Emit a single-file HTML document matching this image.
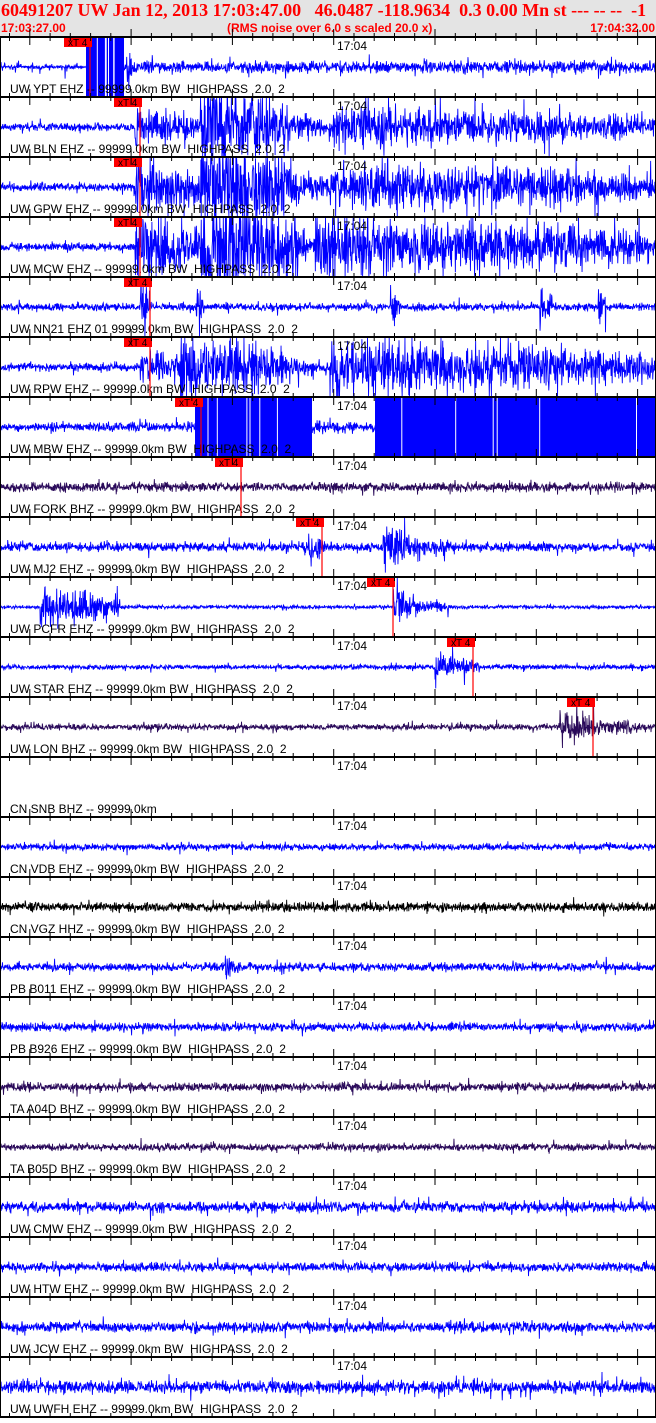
<!DOCTYPE html>
<html><head><meta charset="utf-8"><style>
html,body{margin:0;padding:0;background:#fff;width:656px;height:1418px;overflow:hidden}
#hd{position:absolute;left:0;top:0;width:656px;height:37px;background:#e4e4e4}
#t1{position:absolute;left:1px;top:0px;font:bold 18px "Liberation Serif",serif;color:#f00;white-space:pre}
.t2{position:absolute;top:21px;font:bold 12px "Liberation Sans",sans-serif;color:#f00;white-space:pre}
#w{position:absolute;left:0;top:0;width:656px;height:1418px}
text{white-space:pre}
</style></head><body>
<div id="hd">
<div id="t1">60491207 UW Jan 12, 2013 17:03:47.00   46.0487 -118.9634  0.3 0.00 Mn st --- -- --  -1</div>
<div class="t2" style="left:1px">17:03:27.00</div>
<div class="t2" style="left:227px">(RMS noise over 6.0 s scaled 20.0 x)</div>
<div class="t2" style="right:1px">17:04:32.00</div>
</div>
<div id="w"></div>
<script>
(function(){
var seed=12345;
function rnd(){seed=(seed*16807)%2147483647;return seed/2147483647;}
function g(){return (rnd()+rnd()+rnd()-1.5)*1.4;}
var B='#0000ff',P='#2a0a5a',K='#000000';
var T=[
["UW YPT EHZ -- 99999.0km BW  HIGHPASS  2.0  2",B,4,[[126,132,20]],64,[[86,124]]],
["UW BLN EHZ -- 99999.0km BW  HIGHPASS  2.0  2",B,2.5,[[135,200,14],[200,290,30],[290,330,9],[330,656,14]],114,[]],
["UW GPW EHZ -- 99999.0km BW  HIGHPASS  2.0  2",B,2.5,[[135,200,20],[200,290,38],[290,330,12],[330,656,17]],114,[]],
["UW MCW EHZ -- 99999.0km BW  HIGHPASS  2.0  2",B,2.5,[[135,200,28],[200,300,45],[300,315,12],[315,656,22]],114,[]],
["UW NN21 EHZ 01 99999.0km BW  HIGHPASS  2.0  2",B,2.5,[[140,150,25],[196,204,14],[390,400,12],[540,552,15],[598,606,14]],124,[]],
["UW RPW EHZ -- 99999.0km BW  HIGHPASS  2.0  2",B,2.5,[[140,180,13],[180,290,24],[290,330,7],[330,656,20]],124,[]],
["UW MBW EHZ -- 99999.0km BW  HIGHPASS  2.0  2",B,3,[[312,375,5]],175,[[195,312],[375,656]]],
["UW FORK BHZ -- 99999.0km BW  HIGHPASS  2.0  2",P,3,[],215,[]],
["UW MJ2 EHZ -- 99999.0km BW  HIGHPASS  2.0  2",B,3,[[308,325,13],[383,410,20],[410,460,7]],296,[]],
["UW PCFR EHZ -- 99999.0km BW  HIGHPASS  2.0  2",B,1.2,[[40,120,14],[393,410,16],[410,450,6]],367,[]],
["UW STAR EHZ -- 99999.0km BW  HIGHPASS  2.0  2",B,1.6,[[435,480,9]],447,[]],
["UW LON BHZ -- 99999.0km BW  HIGHPASS  2.0  2",P,2,[[560,600,12],[600,640,6]],567,[]],
["CN SNB BHZ -- 99999.0km",B,0,[],-1,[]],
["CN VDB EHZ -- 99999.0km BW  HIGHPASS  2.0  2",B,2.2,[],-1,[]],
["CN VGZ HHZ -- 99999.0km BW  HIGHPASS  2.0  2",K,3,[],-1,[]],
["PB B011 EHZ -- 99999.0km BW  HIGHPASS  2.0  2",B,2.7,[[225,240,8]],-1,[]],
["PB B926 EHZ -- 99999.0km BW  HIGHPASS  2.0  2",B,2.7,[],-1,[]],
["TA A04D BHZ -- 99999.0km BW  HIGHPASS  2.0  2",P,2.7,[],-1,[]],
["TA B05D BHZ -- 99999.0km BW  HIGHPASS  2.0  2",P,2.3,[],-1,[]],
["UW CMW EHZ -- 99999.0km BW  HIGHPASS  2.0  2",B,3.4,[],-1,[]],
["UW HTW EHZ -- 99999.0km BW  HIGHPASS  2.0  2",B,3,[],-1,[]],
["UW JCW EHZ -- 99999.0km BW  HIGHPASS  2.0  2",B,3.4,[],-1,[]],
["UW UWFH EHZ -- 99999.0km BW  HIGHPASS  2.0  2",B,4.2,[],-1,[]]];
var o=[];
o.push('<svg width="656" height="1418" xmlns="http://www.w3.org/2000/svg">');
for(var i=0;i<T.length;i++){
 var t=T[i],top=37+60*i,c=top+30;
 if(t[2]>0){
  var d=['M0 '+c];
  for(var x=0;x<=656;x+=0.35){
   var a=t[2];
   for(var j=0;j<t[3].length;j++){var e=t[3][j];
    if(x>=e[0]&&x<e[1]){var v=e[2]*(1-0.5*(x-e[0])/(e[1]-e[0]));if(v>a)a=v;}}
   if(i==0&&x<86)a=(rnd()<0.25?4:1);
   var y=c+g()*a*(rnd()<0.08?2:1);
   if(y<top+1)y=top+1;if(y>top+59)y=top+59;
   d.push('L'+x.toFixed(2)+' '+y.toFixed(1));
  }
  o.push('<path d="'+d.join('')+'" fill="none" stroke="'+t[1]+'" stroke-width="0.9"/>');
 }
 for(var j=0;j<t[5].length;j++){var r=t[5][j];
  o.push('<rect x="'+r[0]+'" y="'+top+'" width="'+(r[1]-r[0])+'" height="60" fill="'+B+'"/>');
  for(var q=0;q<6;q++){var gx=r[0]+8+rnd()*(r[1]-r[0]-16);o.push('<rect x="'+gx.toFixed(1)+'" y="'+top+'" width="1" height="60" fill="#fff"/>');}
 }
 o.push('<text x="10" y="'+(top+56)+'" xml:space="preserve" font-family="Liberation Sans, sans-serif" font-size="12" fill="#000">'+t[0]+'</text>');
 o.push('<text x="337" y="'+(top+13)+'" font-family="Liberation Sans, sans-serif" font-size="12" fill="#000">17:04</text>');
 if(t[4]>=0){var m=t[4];
  o.push('<rect x="'+m+'" y="'+top+'" width="28" height="10" fill="#f00"/>');
  o.push('<text x="'+(m+4)+'" y="'+(top+9)+'" font-family="Liberation Sans, sans-serif" font-size="10" fill="#000">xT 4</text>');
  o.push('<line x1="'+(m+26)+'" y1="'+top+'" x2="'+(m+26)+'" y2="'+(top+60)+'" stroke="#f00" stroke-width="1.2"/>');}
}
for(var i=0;i<=23;i++){var y=37+60*i;
 o.push('<rect x="0" y="'+(y-1)+'" width="656" height="2" fill="#000"/>');
 for(var k=-2;k<40;k++){var x=29.8+k*20.26;if(x<0||x>656)continue;var L=(k%5==0)?8:4;
  o.push('<line x1="'+x.toFixed(1)+'" y1="'+(y-L)+'" x2="'+x.toFixed(1)+'" y2="'+(y+L)+'" stroke="#000" stroke-width="1"/>');}
}
o.push('<rect x="0" y="37" width="1" height="1381" fill="#000"/><rect x="655" y="37" width="1" height="1381" fill="#000"/>');
o.push('</svg>');
document.getElementById('w').innerHTML=o.join('');
})();
</script>
</body></html>
